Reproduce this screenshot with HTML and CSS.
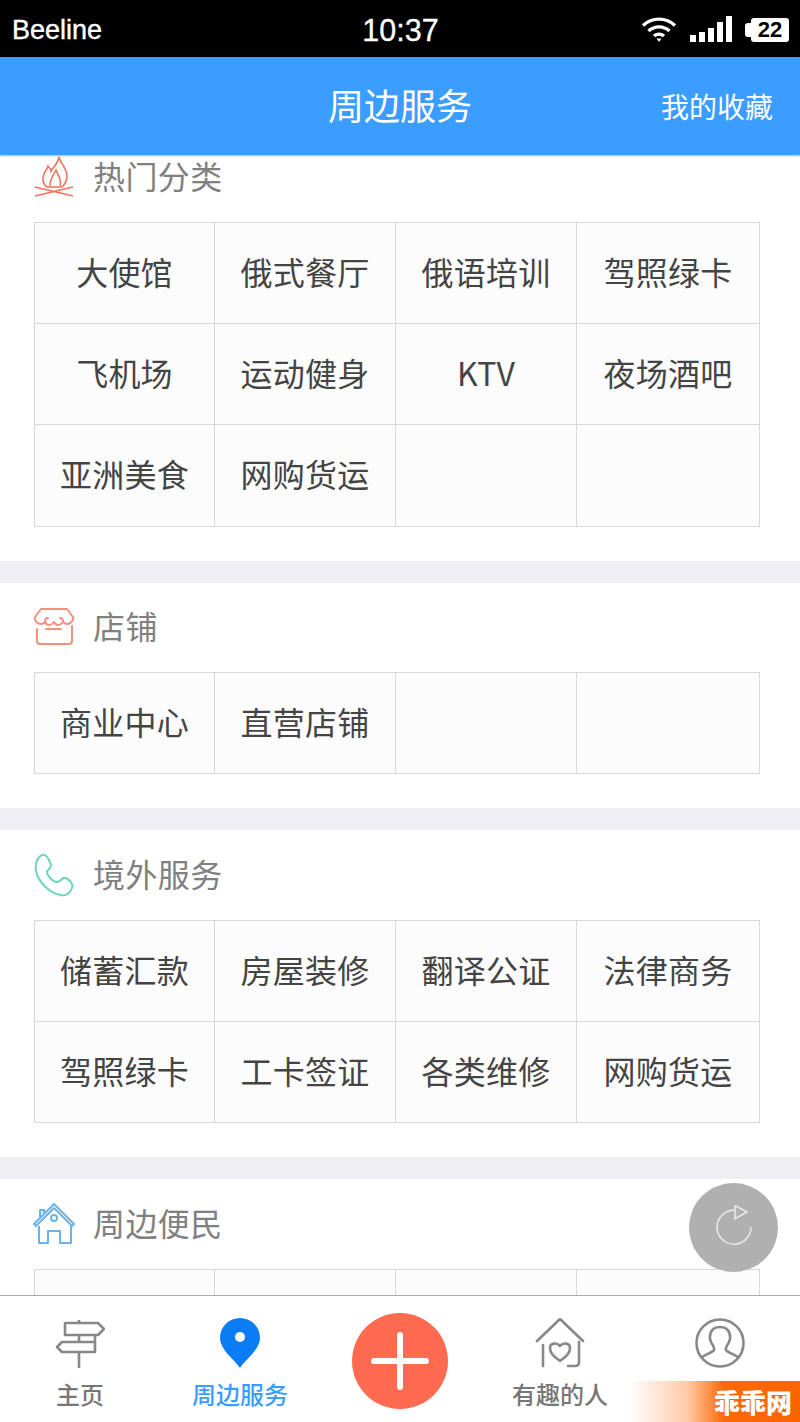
FILE: index.html
```html
<!DOCTYPE html>
<html lang="zh-CN">
<head>
  <meta charset="UTF-8">
  <title>周边服务</title>
  <link rel="stylesheet" href="styles.css">
</head>
<body>
<div class="page">

  <div class="status-bar">
    <span class="carrier">Beeline</span>
    <span class="clock">10:37</span>
    <div class="status-icons">
      <svg class="wifi" width="36" height="26" viewBox="0 0 36 26">
        <path d="M2 9.500C11 1 25 1 34 9.500" fill="none" stroke="#fff" stroke-width="3.400"/>
        <path d="M7.500 15C13.500 9.500 22.500 9.500 28.500 15" fill="none" stroke="#fff" stroke-width="3.400"/>
        <path d="M13 20C16 17.500 20 17.500 23 20" fill="none" stroke="#fff" stroke-width="3.400"/>
        <path d="M15.500 22.500h5L18 26z" fill="#fff"/>
      </svg>
      <svg class="signal" width="42" height="26" viewBox="0 0 42 26">
        <rect x="0" y="19" width="6" height="7" fill="#fff"/>
        <rect x="9" y="16" width="6" height="10" fill="#fff"/>
        <rect x="18" y="12" width="6" height="14" fill="#fff"/>
        <rect x="27" y="6" width="6" height="20" fill="#fff"/>
        <rect x="36" y="0" width="6" height="26" fill="#fff"/>
      </svg>
      <span class="battery">22</span>
    </div>
  </div>

  <header class="top-bar">
    <h1>周边服务</h1>
    <a class="fav-link">我的收藏</a>
  </header>

  <main class="content">
    <div class="scroll">

      <section class="block">
        <div class="block-title">
          <svg width="40" height="42" viewBox="0 0 40 42" fill="none" stroke="#f0735f" stroke-width="1.600">
            <path d="M25 1C26 6 32 12 33 19C33.500 24 31 28 28 31H13C9 28 8 23 10 18C11 15 13 14 14 10C16 12 17 13 17 15C20 11 24 7 25 1Z"/>
            <path d="M16 30C15 25 19 20 22 14C24 19 28 24 26 30"/>
            <path d="M1 40L39 31M1 31L39 40"/>
          </svg>
          <span>热门分类</span>
        </div>
        <div class="cell-grid">
          <div class="cell">大使馆</div>
          <div class="cell">俄式餐厅</div>
          <div class="cell">俄语培训</div>
          <div class="cell">驾照绿卡</div>
          <div class="cell">飞机场</div>
          <div class="cell">运动健身</div>
          <div class="cell">KTV</div>
          <div class="cell">夜场酒吧</div>
          <div class="cell">亚洲美食</div>
          <div class="cell">网购货运</div>
          <div class="cell"></div>
          <div class="cell"></div>
        </div>
      </section>

      <section class="block">
        <div class="block-title">
          <svg width="40" height="38" viewBox="0 0 40 38" fill="none" stroke="#f78f80" stroke-width="2" stroke-linecap="round" stroke-linejoin="round">
            <path d="M7 1H33L39 9C40 15 33 18 29 14C26 18 22 18 20 14C17 18 13 18 11 14C7 18 0 15 1 9Z"/>
            <path d="M11 14C11 11 12 10 14 10M29 14C29 11 28 10 26 10"/>
            <path d="M3 21V33Q3 36 6 36H35Q38 36 38 33V18"/>
            <path d="M12 21H27"/>
          </svg>
          <span>店铺</span>
        </div>
        <div class="cell-grid">
          <div class="cell">商业中心</div>
          <div class="cell">直营店铺</div>
          <div class="cell"></div>
          <div class="cell"></div>
        </div>
      </section>

      <section class="block">
        <div class="block-title">
          <svg width="40" height="44" viewBox="0 0 40 44" fill="none" stroke="#6fd5bd" stroke-width="2" stroke-linejoin="round">
            <path d="M8 2C11 1 13 3 15 7C17 11 18 13 15 16C13 18 12 19 14 22C16 26 19 28 22 29C24 30 26 28 28 26C30 24 33 25 36 28C39 31 39 34 37 37C35 41 31 43 27 42C18 41 8 33 3 22C0 14 2 5 8 2Z"/>
          </svg>
          <span>境外服务</span>
        </div>
        <div class="cell-grid">
          <div class="cell">储蓄汇款</div>
          <div class="cell">房屋装修</div>
          <div class="cell">翻译公证</div>
          <div class="cell">法律商务</div>
          <div class="cell">驾照绿卡</div>
          <div class="cell">工卡签证</div>
          <div class="cell">各类维修</div>
          <div class="cell">网购货运</div>
        </div>
      </section>

      <section class="block">
        <div class="block-title">
          <svg class="icon-wide" width="42" height="42" viewBox="0 0 42 42" fill="none" stroke="#6ab3ea" stroke-width="2" stroke-linejoin="round">
            <path d="M1 21L21 1L41 21L39 23L21 5L3 23Z"/>
            <path d="M7 14V7H11V10"/>
            <circle cx="21" cy="15" r="3"/>
            <path d="M6 23V40H15V28H27V40H38V23"/>
          </svg>
          <span>周边便民</span>
        </div>
        <div class="cell-grid">
          <div class="cell"></div>
          <div class="cell"></div>
          <div class="cell"></div>
          <div class="cell"></div>
        </div>
      </section>

    </div>
  </main>

  <nav class="tab-bar">
    <a class="tab">
      <svg width="50" height="50" viewBox="0 0 50 50" fill="none" stroke="#888" stroke-width="2.600" stroke-linejoin="round">
        <path d="M24 2V5M24 17V24M24 34V50"/>
        <path d="M43 17H10V5H43L49 11Z"/>
        <path d="M40 17V34H7L2 29L7 24H40"/>
      </svg>
      <span>主页</span>
    </a>
    <a class="tab tab-active">
      <svg width="50" height="50" viewBox="0 0 50 50">
        <path d="M25 50C21 43 5 32 5 20A20 20 0 0 1 45 20C45 32 29 43 25 50Z" fill="#0a7cf5"/>
        <circle cx="25" cy="19" r="5" fill="#fff"/>
      </svg>
      <span>周边服务</span>
    </a>
    <a class="tab tab-add">
      <span class="add-btn"><i></i></span>
    </a>
    <a class="tab">
      <svg width="50" height="50" viewBox="0 0 50 50" fill="none" stroke="#888" stroke-width="2.600" stroke-linecap="round" stroke-linejoin="round">
        <path d="M2 23L25 1L48 23"/>
        <path d="M8 27V48"/>
        <path d="M44 24V44Q44 48 40 48H33"/>
        <path d="M25 43C20 39 15 36 15 30C15 25 22 24 25 28C28 24 35 25 35 30C35 36 30 39 25 43Z"/>
      </svg>
      <span>有趣的人</span>
    </a>
    <a class="tab">
      <svg width="50" height="50" viewBox="0 0 50 50" fill="none" stroke="#888" stroke-width="2.600" stroke-linejoin="round">
        <circle cx="25" cy="25" r="23.500"/>
        <path d="M6 40C10 36 17 35 19 32C20 30 18 28 16 24C14 20 14 9 25 9C36 9 36 20 34 24C32 28 30 30 31 32C33 35 40 36 44 40"/>
      </svg>
    </a>
  </nav>

  <button class="refresh-btn">
    <svg width="42" height="46" viewBox="0 0 42 46" fill="none" stroke="#e6e6e6" stroke-width="1.600">
      <path d="M21 5.200A17 17 0 1 0 38 22"/>
      <path d="M22 0.500L34 7L22 13.800Z" stroke-linejoin="round"/>
    </svg>
  </button>

  <div class="watermark"><span>乖乖网</span></div>

</div>
</body>
</html>
```

FILE: styles.css
```css
* {
  box-sizing: border-box;
}

body {
  margin: 0;
  font-family: "Noto Sans CJK SC", "Liberation Sans", sans-serif;
  background: #fff;
}

.page {
  position: relative;
  width: 800px;
  height: 1422px;
  display: flex;
  flex-direction: column;
  overflow: hidden;
}

/* status bar */
.status-bar {
  position: relative;
  height: 57px;
  flex: none;
  background: #000;
  color: #fff;
  font-family: "Liberation Sans", sans-serif;
  display: grid;
  grid-template-columns: 1fr auto 1fr;
  align-items: center;
  padding: 4px 11px 0 12px;
}

.carrier {
  font-size: 27px;
  -webkit-text-stroke: 0.4px #fff;
}

.clock {
  font-size: 30.5px;
  -webkit-text-stroke: 0.3px #fff;
}

.status-icons {
  display: flex;
  justify-content: flex-end;
  align-items: center;
  margin-top: -3px;
}

.signal {
  margin-left: 13px;
}

.battery {
  position: relative;
  width: 38px;
  height: 24px;
  margin-left: 19px;
  margin-top: 2px;
  background: #fff;
  border-radius: 3px;
  color: #000;
  font-size: 22px;
  font-weight: bold;
  line-height: 24px;
  text-align: center;
}

.battery::before {
  content: "";
  position: absolute;
  left: -6px;
  top: 5px;
  width: 6px;
  height: 14px;
  background: #fff;
  border-radius: 3px 0 0 3px;
}

/* blue header */
.top-bar {
  position: relative;
  z-index: 2;
  flex: none;
  height: 98px;
  padding-bottom: 4px;
  background: #3b9dff;
  color: #fff;
  display: flex;
  align-items: center;
  justify-content: center;
  box-shadow: 0 1px 2px rgba(0, 0, 0, 0.3);
}

.top-bar h1 {
  margin: 0;
  font-size: 36px;
  font-weight: 400;
  line-height: 1;
}

.fav-link {
  position: absolute;
  right: 27px;
  top: 35px;
  font-size: 28px;
  line-height: 1;
}

/* sections */
.content {
  flex: 1;
  min-height: 0;
  background: #eeeef4;
}

.scroll {
  margin-top: -22.5px;
}

.block {
  background: #fff;
  padding-bottom: 34px;
  margin-bottom: 22px;
}

.block-title {
  height: 89.5px;
  padding-left: 34px;
  display: flex;
  align-items: center;
  color: #808080;
  font-size: 32px;
  letter-spacing: 0.4px;
  line-height: 1;
}

.block-title svg {
  flex: none;
  margin-right: 19px;
}

.block-title .icon-wide {
  margin: 0 18px 0 -1px;
}

.block-title span {
  white-space: nowrap;
  padding-bottom: 4px;
}

.cell-grid {
  margin-left: 34px;
  width: 726px;
  display: grid;
  grid-template-columns: 180px 181px 181px 183px;
  border-top: 1px solid #d8d8d8;
  border-left: 1px solid #d8d8d8;
}

.cell {
  height: 101.2px;
  padding-bottom: 4px;
  background: #fcfcfc;
  border-right: 1px solid #d8d8d8;
  border-bottom: 1px solid #d8d8d8;
  display: flex;
  align-items: center;
  justify-content: center;
  color: #444;
  font-size: 32px;
  letter-spacing: 0.2px;
  line-height: 1;
}

/* bottom tabs */
.tab-bar {
  position: relative;
  z-index: 2;
  flex: none;
  height: 127px;
  background: #fff;
  border-top: 1px solid #aaa;
  display: grid;
  grid-template-columns: repeat(5, 160px);
}

.tab {
  display: flex;
  flex-direction: column;
  align-items: center;
  padding-top: 22px;
  color: #777;
  font-size: 24px;
  font-weight: 500;
  line-height: 1;
}

.tab span {
  margin-top: 14px;
}

.tab-active {
  color: #3b9dff;
}

.tab-add {
  padding-top: 17px;
}

.tab-add .add-btn {
  position: relative;
  display: block;
  width: 96px;
  height: 96px;
  margin-top: 0;
  border-radius: 50%;
  background: #ff6a50;
}

.add-btn::before,
.add-btn i {
  content: "";
  position: absolute;
  background: #fff;
  border-radius: 3px;
}

.add-btn::before {
  left: 19px;
  top: 45px;
  width: 58px;
  height: 6px;
}

.add-btn i {
  left: 45px;
  top: 19px;
  width: 6px;
  height: 58px;
}

/* floating bits */
.refresh-btn {
  position: absolute;
  left: 689px;
  top: 1183px;
  z-index: 3;
  width: 89px;
  height: 89px;
  padding: 0;
  border: none;
  border-radius: 50%;
  background: #b0b0b0;
  display: flex;
  align-items: center;
  justify-content: center;
}

.watermark {
  position: absolute;
  right: 0;
  bottom: 0;
  z-index: 4;
  width: 170px;
  height: 41px;
  background: linear-gradient(to right, rgba(255, 102, 0, 0), rgba(255, 102, 0, 0.35) 34%, #fb6a07 55%, #fb6400);
  color: #fff;
  font-size: 26px;
  font-weight: 900;
  line-height: 41px;
  text-align: right;
  padding-right: 8px;
}
```
